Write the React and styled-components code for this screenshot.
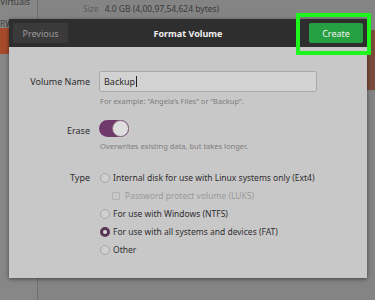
import React from "react";
import styled, { createGlobalStyle } from "styled-components";

const Global = createGlobalStyle`
  html, body { margin: 0; padding: 0; }
  body {
    width: 375px;
    height: 300px;
    overflow: hidden;
    background: #858585;
    font-family: "Noto Sans", "DejaVu Sans", sans-serif;
  }
`;

const Screen = styled.div`
  position: relative;
  width: 375px;
  height: 300px;
  overflow: hidden;
  background: #848484;
`;

const Sidebar = styled.div`
  position: absolute;
  left: 0;
  top: 0;
  width: 37px;
  height: 300px;
  border-right: 1px solid #6f6f6f;
  background: #878787;
`;

const SideText = styled.div`
  position: absolute;
  left: ${(p) => p.x}px;
  top: ${(p) => p.y}px;
  font-size: 8.5px;
  color: #3c3c3c;
`;

const SideStrip = styled.div`
  position: absolute;
  left: 0;
  top: 28px;
  width: 10px;
  height: 26px;
  background: #a64a2a;
`;

const RightStrip = styled.div`
  position: absolute;
  right: 0;
  top: 30px;
  width: 8px;
  height: 60px;
  background: #7a4a3a;
`;

const SizeLine = styled.div`
  position: absolute;
  left: 83px;
  top: 3px;
  font-size: 8.5px;
  color: #3a3a3a;
  span { color: #5c5c5c; margin-right: 6px; }
`;

const Dialog = styled.div`
  position: absolute;
  left: 9px;
  top: 19px;
  width: 358px;
  height: 259px;
  background: #c9c8c9;
  box-shadow: 0 1px 4px rgba(0, 0, 0, 0.5);
  display: flex;
  flex-direction: column;
`;

const Header = styled.div`
  height: 28px;
  background: #2f2e2f;
  display: flex;
  align-items: center;
  justify-content: space-between;
  padding: 0 4px;
  position: relative;
`;

const Title = styled.div`
  position: absolute;
  left: 0;
  right: 0;
  text-align: center;
  color: #f0f0f0;
  font-weight: 700;
  font-size: 9px;
  pointer-events: none;
`;

const HeadButton = styled.div`
  height: 20px;
  display: flex;
  align-items: center;
  justify-content: center;
  border-radius: 2px;
  font-size: 9px;
  width: ${(p) => p.w}px;
  background: ${(p) => (p.primary ? "#27a043" : "#3b3a3b")};
  color: ${(p) => (p.primary ? "#f2f2f2" : "#9c9c9c")};
`;

const Highlight = styled.div`
  position: absolute;
  left: 296px;
  top: 13px;
  width: 67px;
  height: 34px;
  border: 4px solid #1df51d;
  border-radius: 1px;
`;

const Body = styled.div`
  display: grid;
  grid-template-columns: 81px 218px;
  column-gap: 9px;
  padding-top: 24px;
  font-size: 8.5px;
  color: #2e2e2e;
`;

const Label = styled.div`
  text-align right;
  text-align: right;
  font-size: 9px;
  padding-top: ${(p) => p.pt || 0}px;
`;

const Field = styled.div`
  display: flex;
  flex-direction: column;
`;

const Input = styled.div`
  height: 19px;
  border: 1px solid #a9a7a7;
  border-radius: 2px;
  background: #d3d2d2;
  display: flex;
  align-items: center;
  padding-left: 4px;
  font-size: 9px;
  color: #2a2a2a;
`;

const Caret = styled.span`
  display: inline-block;
  width: 1px;
  height: 11px;
  background: #222;
  margin-left: 1px;
`;

const Hint = styled.div`
  font-size: 7.5px;
  color: #7d7c7c;
  white-space: nowrap;
  margin: 4px 0 ${(p) => p.mb}px 1px;
`;

const Switch = styled.div`
  width: 30px;
  height: 17px;
  border-radius: 9px;
  background: #6f3a6b;
  position: relative;
  &::after {
    content: "";
    position: absolute;
    right: 0;
    top: 0;
    width: 15px;
    height: 15px;
    border-radius: 50%;
    border: 1px solid #8a6a86;
    background: #dedede;
  }
`;

const Options = styled.div`
  display: flex;
  flex-direction: column;
  gap: 7px;
  padding-top: 1px;
`;

const Option = styled.div`
  display: flex;
  align-items: center;
  gap: 3px;
  height: 11px;
  white-space: nowrap;
  padding-left: ${(p) => (p.indent ? 13 : 1)}px;
  color: ${(p) => (p.disabled ? "#9a9999" : "#2e2e2e")};
`;

const Radio = styled.span`
  flex: none;
  width: 10px;
  height: 10px;
  border-radius: 50%;
  box-sizing: border-box;
  border: ${(p) => (p.checked ? "3px solid #5b3556" : "1px solid #a9a8a8")};
  background: ${(p) => (p.checked ? "#dcdcdc" : "#cfcece")};
`;

const Check = styled.span`
  flex: none;
  width: 8px;
  height: 8px;
  border: 1px solid #b3b2b2;
  border-radius: 1px;
  box-sizing: border-box;
  margin-right: 2px;
`;

const options = [
  { text: "Internal disk for use with Linux systems only (Ext4)" },
  { text: "Password protect volume (LUKS)", check: true },
  { text: "For use with Windows (NTFS)" },
  { text: "For use with all systems and devices (FAT)", checked: true },
  { text: "Other" },
];

export default function App() {
  return (
    <Screen>
      <Global />
      <Sidebar />
      <SideText x={0} y={-4}>Virtuals</SideText>
      <SideText x={0} y={18}>RW</SideText>
      <SideStrip />
      <RightStrip />
      <SizeLine>
        <span>Size</span>4.0 GB (4,00,97,54,624 bytes)
      </SizeLine>
      <Dialog>
        <Header>
          <HeadButton w={55}>Previous</HeadButton>
          <Title>Format Volume</Title>
          <HeadButton w={54} primary>Create</HeadButton>
        </Header>
        <Body>
          <Label pt={4}>Volume Name</Label>
          <Field>
            <Input>
              Backup<Caret />
            </Input>
            <Hint mb={14}>For example: “Angela’s Files” or “Backup”.</Hint>
          </Field>
          <Label pt={4}>Erase</Label>
          <Field>
            <Switch />
            <Hint mb={20}>Overwrites existing data, but takes longer.</Hint>
          </Field>
          <Label>Type</Label>
          <Options>
            {options.map((o) => (
              <Option key={o.text} indent={o.check} disabled={o.check}>
                {o.check ? <Check /> : <Radio checked={o.checked} />}
                {o.text}
              </Option>
            ))}
          </Options>
        </Body>
      </Dialog>
      <Highlight />
    </Screen>
  );
}
